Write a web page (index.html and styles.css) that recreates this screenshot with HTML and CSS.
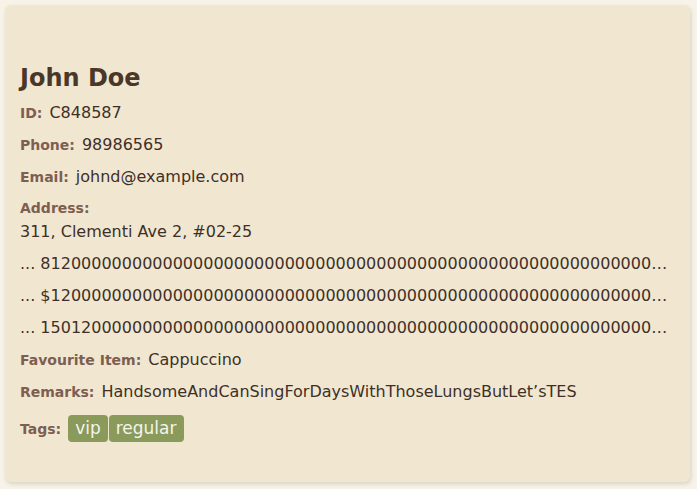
FILE: index.html
```html
<!DOCTYPE html>
<html>
<head>
<meta charset="utf-8">
<link rel="stylesheet" href="styles.css">
</head>
<body>
<div class="page">
  <div class="card">
    <div class="name">John Doe</div>
    <div class="field"><span class="label">ID:</span><span class="value">C848587</span></div>
    <div class="field"><span class="label">Phone:</span><span class="value">98986565</span></div>
    <div class="field"><span class="label">Email:</span><span class="value">johnd@example.com</span></div>
    <div class="field block">
      <div class="label addr-label">Address:</div>
      <div class="value">311, Clementi Ave 2, #02-25</div>
    </div>
    <div class="field trunc">... 8120000000000000000000000000000000000000000000000000000000000000000000000000000000000</div>
    <div class="field trunc">... $120000000000000000000000000000000000000000000000000000000000000000000000000000000000</div>
    <div class="field trunc">... 150120000000000000000000000000000000000000000000000000000000000000000000000000000000</div>
    <div class="field"><span class="label">Favourite Item:</span><span class="value">Cappuccino</span></div>
    <div class="field"><span class="label">Remarks:</span><span class="value">HandsomeAndCanSingForDaysWithThoseLungsButLet’sTES</span></div>
    <div class="field tags-row"><span class="label">Tags:</span>
      <div class="tags"><span class="tag">vip</span><span class="tag">regular</span></div>
    </div>
  </div>
</div>
</body>
</html>
```
FILE: styles.css
```css
html, body {
  margin: 0;
  padding: 0;
  background: #f7f3e9;
}
body {
  font-family: "DejaVu Sans", sans-serif;
  color: #3e3028;
}
.page {
  padding: 5px 7px 7px 5px;
}
.card {
  background: #f1e7d1;
  border-radius: 6px;
  box-shadow: 1px 2px 4px rgba(80, 60, 30, 0.18);
  padding: 58px 15px 40px 15px;
}
.name {
  font-size: 24px;
  font-weight: bold;
  line-height: 30px;
  color: #4b3728;
  margin-bottom: 8px;
}
.field {
  line-height: 24px;
  margin-bottom: 8px;
  font-size: 16px;
}
.label {
  font-size: 14px;
  font-weight: bold;
  color: #7d5e51;
  margin-right: 7px;
}
.addr-label {
  line-height: 23px;
}
.value {
  font-size: 16px;
  color: #3e3028;
}
.trunc {
  white-space: nowrap;
  overflow: hidden;
  text-overflow: ellipsis;
}
.tags-row {
  display: flex;
  align-items: center;
  padding-top: 3px;
  margin-bottom: 0;
}
.tags {
  display: flex;
  gap: 1px;
}
.tag {
  background: #8a9a5b;
  color: #f4f4ee;
  font-size: 17px;
  height: 27px;
  line-height: 27px;
  padding: 0 7px;
  border-radius: 4px;
}
```
